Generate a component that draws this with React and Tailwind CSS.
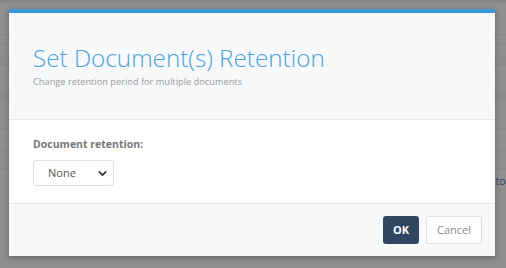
import React from "react";

const ChevronDown = () => (
    <svg className="w-[9px] h-[9px] text-[#333]" viewBox="0 0 10 10" fill="none" aria-hidden="true">
        <path d="M1.5 3.2L5 6.7l3.5-3.5" stroke="currentColor" strokeWidth="1.9" strokeLinecap="round" strokeLinejoin="round" />
    </svg>
);

const App = () => {
    return (
        <div className="relative w-[506px] h-[268px] overflow-hidden bg-[#8f8f8f] font-['Open_Sans',sans-serif]">
            {/* dimmed page behind the dialog */}
            <div className="flex flex-col h-full">
                <div className="h-[3px] bg-[#878787]" />
                <div className="h-[32px] border-b border-[#868686]" />
                <div className="h-[10px] border-b border-[#888]" />
                <div className="h-[12px]" />
                <div className="h-[9px] bg-[#8a8a8a]" />
                <div className="h-[26px]" />
                <div className="h-[8px] bg-[#8a8a8a]" />
                <div className="h-[29px] border-b border-[#888]" />
                <div className="h-[22px] border-b border-[#888]" />
                <div className="h-[18px] border-b border-[#888]" />
                <div className="flex justify-end pt-[5px] text-[11px] text-[#2c4a6b] leading-[14px]">to</div>
            </div>

            {/* dialog */}
            <div className="absolute left-[9px] top-[9px] w-[486px] bg-white border-t-4 border-[#3a9bdc] shadow-[0_2px_6px_rgba(0,0,0,0.3)]">
                <div className="h-[107px] bg-[#f7f9fb] border-b border-[#e6e8ea] pl-[24px] pt-[29px]">
                    <h1 className="text-[24.25px] leading-[32px] font-light text-[#4aa2df]">Set Document(s) Retention</h1>
                    <p className="mt-[2px] text-[9.25px] leading-[12px] text-[#9a9a9a]">Change retention period for multiple documents</p>
                </div>

                <div className="h-[83px] pl-[24px] pt-[17px]">
                    <label className="block text-[10.5px] leading-[14px] font-bold text-[#777]">Document retention:</label>
                    <button
                        type="button"
                        className="mt-[9px] w-[81px] h-[26px] flex items-center justify-between pl-[14px] pr-[6px] bg-white border border-[#dedede] rounded-[3px] text-[11px] text-[#555]"
                    >
                        <span>None</span>
                        <ChevronDown />
                    </button>
                </div>

                <div className="h-[53px] bg-[#f7f9fb] border-t border-[#e6e8ea] flex justify-end items-start gap-[7px] pt-[12px] pr-[13px]">
                    <button type="button" className="w-[36px] h-[28px] rounded-[3px] bg-[#304660] text-white text-[11px] font-bold">OK</button>
                    <button type="button" className="w-[56px] h-[28px] rounded-[3px] bg-white border border-[#e0e0e0] text-[#8a8a8a] text-[11px]">Cancel</button>
                </div>
            </div>
        </div>
    );
};

export default App;
